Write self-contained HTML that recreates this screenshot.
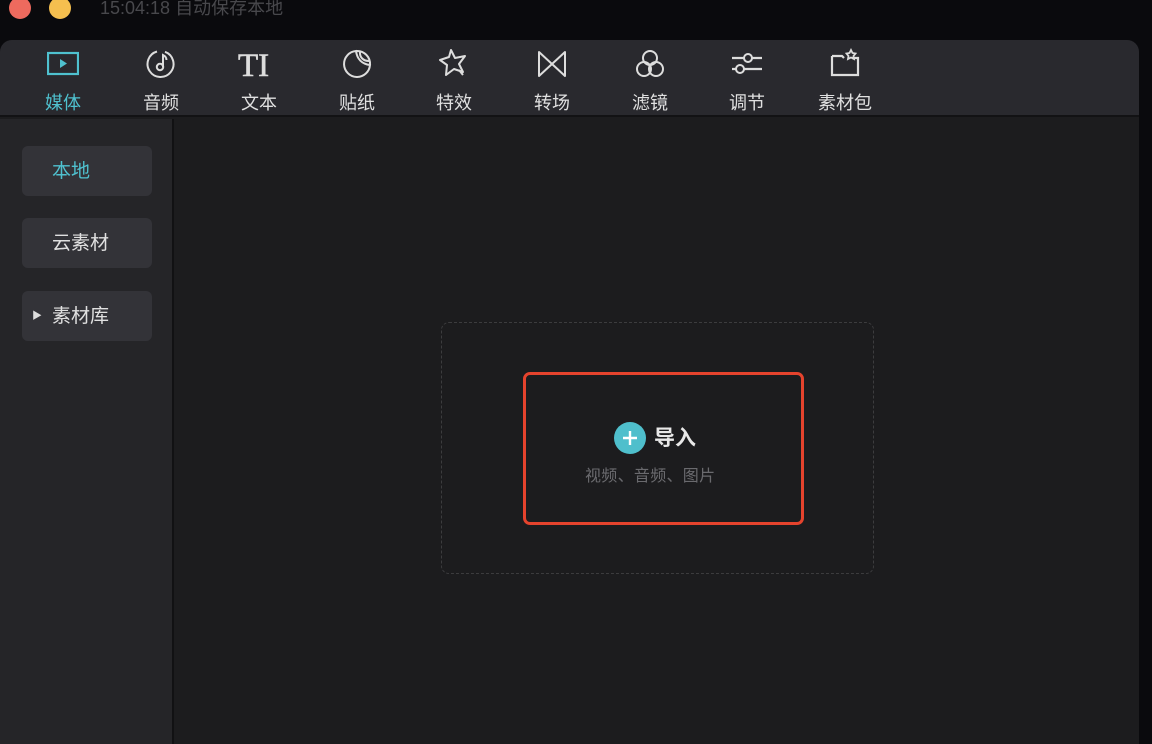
<!DOCTYPE html>
<html><head><meta charset="utf-8"><style>
*{margin:0;padding:0;box-sizing:border-box}
body{width:1152px;height:744px;overflow:hidden;background:#0a0a0d;font-family:"Liberation Sans","Noto Sans CJK SC",sans-serif;position:relative}
.dot{position:absolute;width:22px;height:22px;border-radius:50%;top:-3px}
.title{position:absolute;left:100px;top:-6px;font-size:18px;color:#48484c}
.panel{position:absolute;left:0;top:40px;width:1139px;height:704px;background:#1c1c1e;border-radius:12px 12px 0 0;overflow:hidden}
.tb{position:absolute;left:0;top:0;width:100%;height:77px;background:#29292e;border-bottom:2px solid #121214}
.it{position:absolute;top:0;width:80px;text-align:center;color:#e0e0e0;font-size:18px}
.it svg{position:absolute;left:24px;top:8px}
.it span{position:absolute;left:0;width:80px;top:49px}
.side{position:absolute;left:0;top:79px;width:174px;height:640px;background:#252528;border-right:2px solid #111113}
.btn{position:absolute;left:22px;width:130px;height:50px;background:#333338;border-radius:6px;color:#e0e0e0;font-size:19px;line-height:52px;padding-left:30px}
.dash{position:absolute;left:441px;top:282px;width:433px;height:252px;border:1px dashed #3c3c3e;border-radius:8px}
.red{position:absolute;left:523px;top:332px;width:281px;height:153px;border:3px solid #e5432d;border-radius:7px}
</style></head><body>
<div class="dot" style="left:9px;background:#ee6a5e"></div>
<div class="dot" style="left:49px;background:#f5bf4f"></div>
<div class="title">15:04:18 自动保存本地</div>
<div class="panel">
<div class="tb">
<div class="it" style="left:23px;color:#4fc1cf"><svg width="32" height="32" viewBox="0 0 32 32"><rect x="1" y="5" width="30" height="21" fill="none" stroke="#4fc1cf" stroke-width="2.2"/><path d="M13 11v9l7-4.5z" fill="#4fc1cf"/></svg><span>媒体</span></div>
<div class="it" style="left:121px"><svg width="32" height="32" viewBox="0 0 32 32"><path d="M12 3.5A13 13 0 1 0 20 3.8" fill="none" stroke="#ddd" stroke-width="2"/><circle cx="15" cy="19" r="3.2" fill="none" stroke="#ddd" stroke-width="2"/><path d="M18 19V7c2 1 3.5 2.5 3.5 5" fill="none" stroke="#ddd" stroke-width="2"/></svg><span>音频</span></div>
<div class="it" style="left:219px"><svg width="44" height="32" viewBox="0 0 44 32" style="left:18px"><text x="1" y="28" font-family="Liberation Serif" font-size="33" fill="#ddd" stroke="#ddd" stroke-width="0.6">TI</text></svg><span>文本</span></div>
<div class="it" style="left:317px"><svg width="32" height="32" viewBox="0 0 32 32"><path d="M29 17A13 13 0 1 1 15 3C16 11 21 16 29 17zM15 3A13 13 0 0 1 29 17" fill="none" stroke="#ddd" stroke-width="2"/><path d="M19 4c-.5 5 3 9 9 9" fill="none" stroke="#ddd" stroke-width="2"/></svg><span>贴纸</span></div>
<div class="it" style="left:414px"><svg width="32" height="32" viewBox="0 0 32 32"><path d="M13 2l4 8 10-2-6 8 4 8-9-3-8 6 1-10-7-5 9-3z M21 22l4 5" fill="none" stroke="#ddd" stroke-width="2" stroke-linejoin="round"/></svg><span>特效</span></div>
<div class="it" style="left:512px"><svg width="32" height="32" viewBox="0 0 32 32"><path d="M3 4v24l26-24v24z" fill="none" stroke="#ddd" stroke-width="2" stroke-linejoin="round"/></svg><span>转场</span></div>
<div class="it" style="left:610px"><svg width="32" height="32" viewBox="0 0 32 32"><circle cx="16" cy="10" r="7" fill="none" stroke="#ddd" stroke-width="2"/><circle cx="10" cy="21" r="7" fill="none" stroke="#ddd" stroke-width="2"/><circle cx="22" cy="21" r="7" fill="none" stroke="#ddd" stroke-width="2"/></svg><span>滤镜</span></div>
<div class="it" style="left:707px"><svg width="32" height="32" viewBox="0 0 32 32"><path d="M1 10h12M21 10h10M1 21h4M13 21h18" stroke="#ddd" stroke-width="2.2"/><circle cx="17" cy="10" r="4" fill="none" stroke="#ddd" stroke-width="2"/><circle cx="9" cy="21" r="4" fill="none" stroke="#ddd" stroke-width="2"/></svg><span>调节</span></div>
<div class="it" style="left:805px"><svg width="32" height="32" viewBox="0 0 32 32"><path d="M3 8v19h26V10h-6M3 8h10l2 2" fill="none" stroke="#ddd" stroke-width="2.2"/><path d="M22 2l1.5 3 3 .5-2 2.5.5 3-3-1.5-3 1.5.5-3-2-2.5 3-.5z" fill="none" stroke="#ddd" stroke-width="1.8"/></svg><span>素材包</span></div>
</div>
<div class="side">
<div class="btn" style="top:27px;color:#4fc1cf">本地</div>
<div class="btn" style="top:99px">云素材</div>
<div class="btn" style="top:172px"><span style="position:absolute;left:10px;top:0;font-size:10px;color:#ddd">▶</span>素材库</div>
</div>
<div class="dash"></div>
<div class="red"></div>
<div style="position:absolute;left:614px;top:382px;width:32px;height:32px;border-radius:50%;background:#4fbfcc"><svg width="32" height="32" viewBox="0 0 32 32"><path d="M16 9v14M9 16h14" stroke="#fff" stroke-width="2.4"/></svg></div>
<div style="position:absolute;left:654px;top:382px;font-size:21px;font-weight:bold;color:#e8e8e8">导入</div>
<div style="position:absolute;left:585px;top:422px;font-size:16px;color:#6a6a6e;letter-spacing:0.3px">视频、音频、图片</div>
</div>
</body></html>
